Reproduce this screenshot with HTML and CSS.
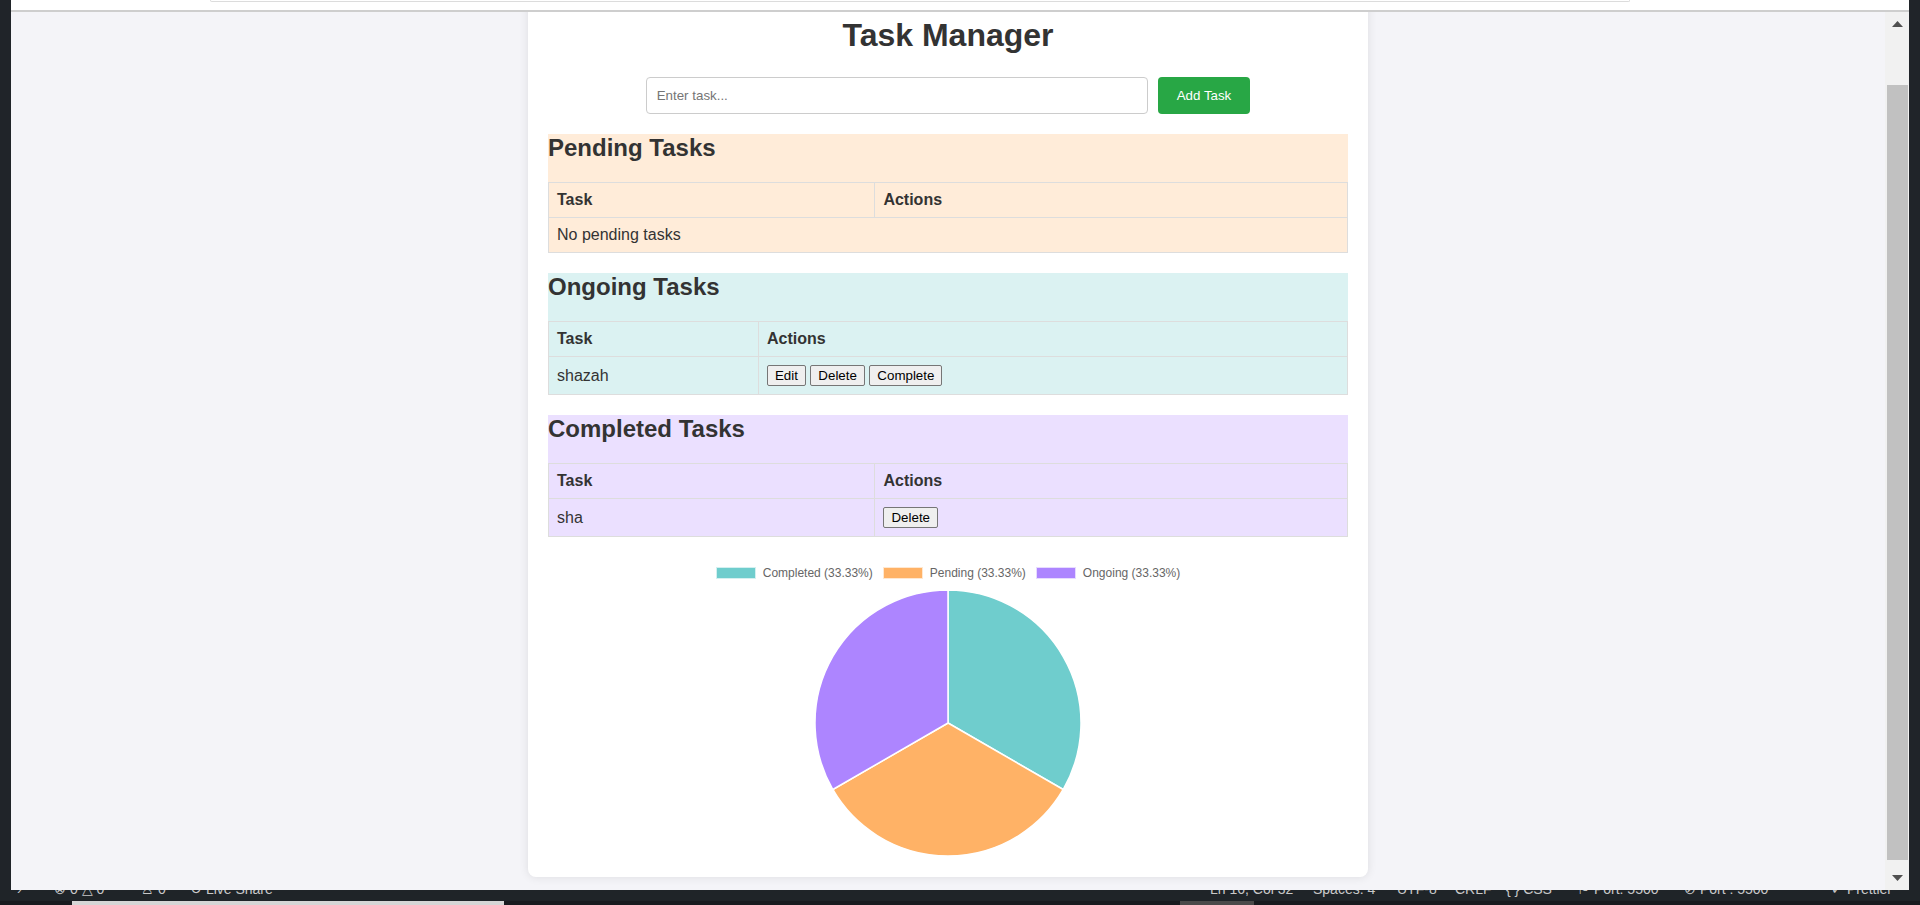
FILE: index.html
```html
<!DOCTYPE html>
<html lang="en">
<head>
<meta charset="utf-8">
<title>Task Manager</title>
<link rel="stylesheet" href="styles.css">
</head>
<body>
<div class="screen">
  <div class="frame">
    <div class="edge"></div>
    <div class="browser">
      <div class="topbar"><div class="pill"></div></div>
      <div class="topline"></div>
      <div class="viewport">
        <div class="page">
          <div class="card">
            <h1 class="title">Task Manager</h1>
            <div class="add-row">
              <input class="task-input" type="text" placeholder="Enter task...">
              <button class="add-btn">Add Task</button>
            </div>

            <div class="section pending">
              <h2 class="section-title">Pending Tasks</h2>
              <table class="task-table">
                <thead><tr><th>Task</th><th>Actions</th></tr></thead>
                <tbody><tr><td colspan="2">No pending tasks</td></tr></tbody>
              </table>
            </div>

            <div class="section ongoing">
              <h2 class="section-title">Ongoing Tasks</h2>
              <table class="task-table">
                <thead><tr><th>Task</th><th>Actions</th></tr></thead>
                <tbody><tr><td>shazah</td><td><button class="row-btn">Edit</button> <button class="row-btn">Delete</button> <button class="row-btn">Complete</button></td></tr></tbody>
              </table>
            </div>

            <div class="section completed">
              <h2 class="section-title">Completed Tasks</h2>
              <table class="task-table">
                <thead><tr><th>Task</th><th>Actions</th></tr></thead>
                <tbody><tr><td>sha</td><td><button class="row-btn">Delete</button></td></tr></tbody>
              </table>
            </div>

            <div class="chart">
              <div class="legend">
                <div class="legend-item"><span class="swatch teal"></span><span>Completed (33.33%)</span></div>
                <div class="legend-item"><span class="swatch orange"></span><span>Pending (33.33%)</span></div>
                <div class="legend-item"><span class="swatch purple"></span><span>Ongoing (33.33%)</span></div>
              </div>
              <svg class="pie" width="268" height="268" viewBox="0 0 268 268">
                <path d="M134,134 L134,1 A133,133 0 0 1 249.18,200.5 Z" fill="#6fcdcd" stroke="#fff" stroke-width="1.5" stroke-linejoin="round"/>
                <path d="M134,134 L249.18,200.5 A133,133 0 0 1 18.82,200.5 Z" fill="#ffb266" stroke="#fff" stroke-width="1.5" stroke-linejoin="round"/>
                <path d="M134,134 L18.82,200.5 A133,133 0 0 1 134,1 Z" fill="#ad85ff" stroke="#fff" stroke-width="1.5" stroke-linejoin="round"/>
              </svg>
            </div>
          </div>
        </div>
        <div class="scrollbar">
          <div class="sb-btn"><svg width="11" height="6" viewBox="0 0 11 6"><polygon points="0,6 5.5,0 11,6" fill="#505050"/></svg></div>
          <div class="sb-track"><div class="sb-thumb"></div></div>
          <div class="sb-btn"><svg width="11" height="6" viewBox="0 0 11 6"><polygon points="0,0 11,0 5.5,6" fill="#505050"/></svg></div>
        </div>
      </div>
    </div>
    <div class="edge"></div>
  </div>
  <div class="statusbar">
    <div class="status-line">
      <span class="st w37">&#8250;</span>
      <span class="st w87">&#8855; 0 &#9651; 0</span>
      <span class="st w49">&#9817; 0</span>
      <span class="st w1020">&#8635; Live Share</span>
      <span class="st w103">Ln 16, Col 32</span>
      <span class="st w84">Spaces: 4</span>
      <span class="st w58">UTF-8</span>
      <span class="st w51">CRLF</span>
      <span class="st w71">{ } CSS</span>
      <span class="st w107">&#9873; Port: 5500</span>
      <span class="st w147">&#8856; Port : 5500</span>
      <span class="st">&#10003; Prettier</span>
    </div>
  </div>
  <div class="bottombar">
    <div class="bb-light"></div>
    <div class="bb-dark"></div>
  </div>
</div>
</body>
</html>
```
FILE: styles.css
```css
html, body {
  margin: 0;
  padding: 0;
}

body {
  background: #202429;
  font-family: "Liberation Sans", Arial, sans-serif;
  overflow: hidden;
}

.screen {
  width: 1920px;
  height: 905px;
  display: grid;
  grid-template-rows: 890px 11px 4px;
  overflow: hidden;
}

.frame {
  display: grid;
  grid-template-columns: 11px 1fr 11px;
  min-height: 0;
}

.edge {
  background: #202429;
}

.browser {
  display: grid;
  grid-template-rows: 10px 2px 1fr;
  min-height: 0;
  min-width: 0;
}

.topbar {
  background: #ffffff;
  overflow: hidden;
}

.pill {
  margin-left: 199px;
  width: 1418px;
  height: 1px;
  border: 1px solid #dcdcdc;
  border-top: none;
  border-radius: 0 0 8px 8px;
}

.topline {
  background: #cecece;
}

.viewport {
  display: grid;
  grid-template-columns: 1fr 24px;
  min-height: 0;
  overflow: hidden;
}

.page {
  background: #f4f4f8;
  overflow: hidden;
  min-width: 0;
}

.card {
  width: 800px;
  margin: -15px auto 0;
  padding: 20px;
  background: #ffffff;
  border-radius: 8px;
  box-shadow: 0 0 10px rgba(0, 0, 0, 0.1);
  color: #333333;
}

.title {
  font-size: 32px;
  font-weight: bold;
  text-align: center;
  margin: 0 0 23px;
  color: #333333;
}

.add-row {
  display: flex;
  justify-content: center;
  gap: 10px;
}

.task-input {
  width: 480px;
  padding: 10px;
  border: 1px solid #cccccc;
  border-radius: 4px;
  font-family: "Liberation Sans", Arial, sans-serif;
  font-size: 13.333px;
  color: #333333;
  outline: none;
}

.task-input::placeholder {
  color: #757575;
}

.add-btn {
  padding: 10px 19px;
  background: #28a745;
  color: #ffffff;
  border: none;
  border-radius: 4px;
  font-family: "Liberation Sans", Arial, sans-serif;
  font-size: 13.333px;
}

.section {
  margin-top: 20px;
}

.pending {
  background: rgba(255, 159, 64, 0.2);
}

.ongoing {
  background: rgba(75, 192, 192, 0.2);
}

.completed {
  background: rgba(153, 102, 255, 0.2);
}

.section-title {
  font-size: 24px;
  font-weight: bold;
  margin: 0 0 20px;
  color: #333333;
}

.task-table {
  width: 100%;
  border-collapse: collapse;
  font-size: 16px;
  color: #333333;
}

.task-table th,
.task-table td {
  border: 1px solid #dddddd;
  padding: 8px;
  text-align: left;
}

.task-table th {
  font-weight: bold;
}

.row-btn {
  font-family: "Liberation Sans", Arial, sans-serif;
  font-size: 13.333px;
  color: #000000;
  background: #efefef;
  border: 1px solid #767676;
  border-radius: 2px;
  padding: 2px 7px;
  margin: 0;
  line-height: normal;
}

.chart {
  margin-top: 20px;
  height: 300px;
}

.legend {
  display: flex;
  justify-content: center;
  gap: 10px;
  padding: 10px 0;
  height: 12px;
  font-size: 12px;
  line-height: 12px;
  color: #666666;
}

.legend-item {
  display: flex;
  align-items: center;
  gap: 7px;
}

.swatch {
  width: 38px;
  height: 10px;
  border: 1px solid rgba(255, 255, 255, 0.7);
}

.swatch.teal { background: #6fcdcd; }
.swatch.orange { background: #ffb266; }
.swatch.purple { background: #ad85ff; }

.pie {
  display: block;
  margin: 0 auto;
}

.scrollbar {
  background: #f1f1f1;
  display: flex;
  flex-direction: column;
  min-height: 0;
}

.sb-btn {
  height: 24px;
  display: flex;
  align-items: center;
  justify-content: center;
  padding-left: 1px;
}

.sb-track {
  flex: 1;
}

.sb-thumb {
  margin: 49px 1px 0 2px;
  height: 775px;
  background: #c1c1c1;
}

.statusbar {
  background: #1f2428;
  overflow: hidden;
}

.status-line {
  display: flex;
  margin-top: -12px;
  padding-left: 17px;
  font-size: 14px;
  line-height: 22px;
  color: #c8c8c8;
  white-space: nowrap;
}

.st { flex: none; }
.w37 { width: 37px; }
.w87 { width: 87px; }
.w49 { width: 49px; }
.w1020 { width: 1020px; }
.w103 { width: 103px; }
.w84 { width: 84px; }
.w58 { width: 58px; }
.w51 { width: 51px; }
.w71 { width: 71px; }
.w107 { width: 107px; }
.w147 { width: 147px; }

.bottombar {
  background: #181b1f;
  display: flex;
}

.bb-light {
  margin-left: 72px;
  width: 432px;
  background: #d6d6d6;
}

.bb-dark {
  margin-left: 676px;
  width: 74px;
  background: #4a4a4a;
}
```
